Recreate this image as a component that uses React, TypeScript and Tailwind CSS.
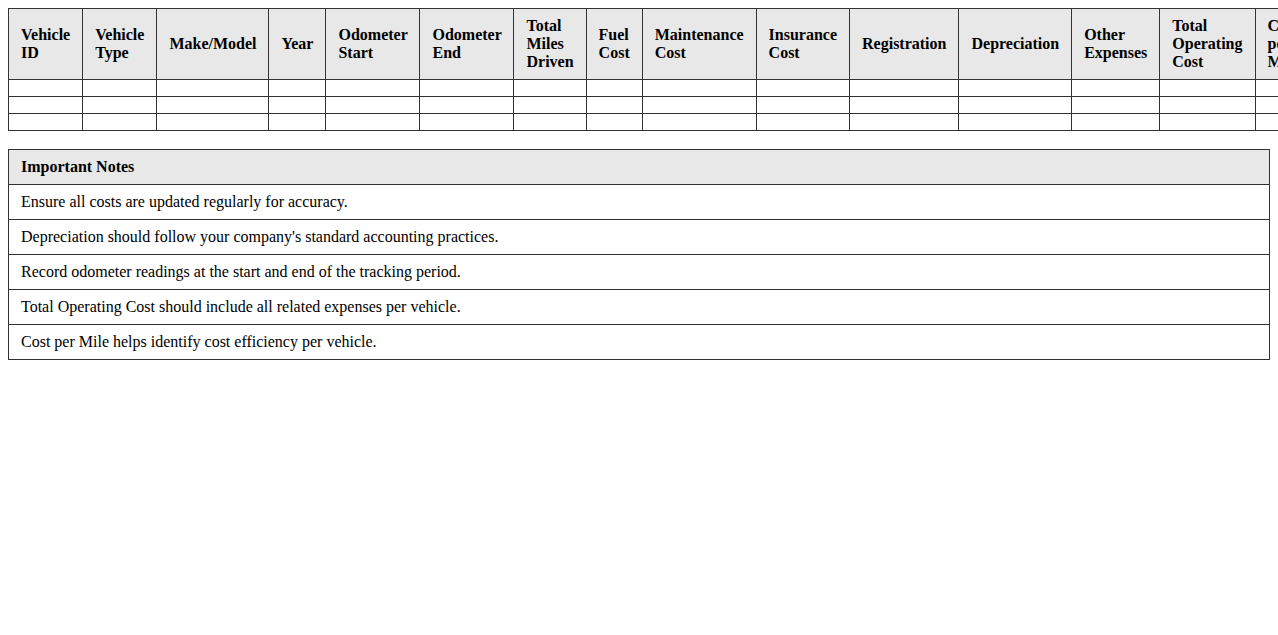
const columns = [
  "Vehicle ID",
  "Vehicle Type",
  "Make/Model",
  "Year",
  "Odometer Start",
  "Odometer End",
  "Total Miles Driven",
  "Fuel Cost",
  "Maintenance Cost",
  "Insurance Cost",
  "Registration",
  "Depreciation",
  "Other Expenses",
  "Total Operating Cost",
  "Cost per Mile",
];

const notes = [
  "Ensure all costs are updated regularly for accuracy.",
  "Depreciation should follow your company's standard accounting practices.",
  "Record odometer readings at the start and end of the tracking period.",
  "Total Operating Cost should include all related expenses per vehicle.",
  "Cost per Mile helps identify cost efficiency per vehicle.",
];

export default function App() {
  return (
    <div className="m-2 bg-white font-['Liberation_Serif','Times_New_Roman',serif] text-base text-black">
      {/* Cost tracking grid */}
      <table className="w-full border-collapse">
        <thead>
          <tr>
            {columns.map((col) => (
              <th
                key={col}
                className="border border-[#333] bg-[#e8e8e8] px-3 py-2 text-left align-middle font-bold leading-[18px]"
              >
                {col}
              </th>
            ))}
          </tr>
        </thead>
        <tbody>
          {[0, 1, 2].map((row) => (
            <tr key={row}>
              {columns.map((col) => (
                <td key={col} className="border border-[#333] px-3 py-2" />
              ))}
            </tr>
          ))}
        </tbody>
      </table>

      {/* Notes */}
      <table className="mt-[18px] w-full border-collapse">
        <thead>
          <tr>
            <th className="border border-[#333] bg-[#e8e8e8] px-3 py-2 text-left font-bold leading-[18px]">
              Important Notes
            </th>
          </tr>
        </thead>
        <tbody>
          {notes.map((note) => (
            <tr key={note}>
              <td className="border border-[#333] px-3 py-2 leading-[18px]">{note}</td>
            </tr>
          ))}
        </tbody>
      </table>
    </div>
  );
}
